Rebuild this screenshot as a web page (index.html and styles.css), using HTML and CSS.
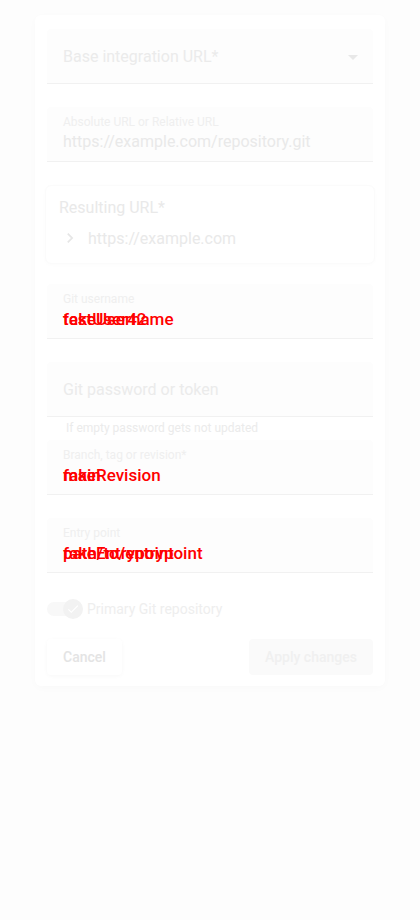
FILE: index.html
```html
<!DOCTYPE html>
<html>
<head>
<meta charset="utf-8">
<link rel="stylesheet" href="styles.css">
</head>
<body>
<div class="page">
  <div class="card">
    <div class="row">
      <div class="field select">
        <span class="placeholder">Base integration URL*</span>
        <span class="caret"></span>
      </div>
    </div>
    <div class="row">
      <div class="field top">
        <span class="label">Absolute URL or Relative URL</span>
        <span class="text">https://example.com/repository.git</span>
      </div>
    </div>
    <div class="result">
      <div class="result-title">Resulting URL*</div>
      <div class="result-line">
        <svg class="chev" viewBox="0 0 24 24" width="20" height="20"><path d="M10 6 8.59 7.41 13.17 12l-4.58 4.59L10 18l6-6z" fill="currentColor"/></svg>
        <span>https://example.com</span>
      </div>
    </div>
    <div class="row">
      <div class="field top">
        <span class="label">Git username</span>
        <span class="stack"><span class="red">fakeUsername</span><span class="red">testUser42</span></span>
      </div>
    </div>
    <div class="row">
      <div class="field">
        <span class="placeholder">Git password or token</span>
      </div>
      <div class="helper">If empty password gets not updated</div>
    </div>
    <div class="row">
      <div class="field top">
        <span class="label">Branch, tag or revision*</span>
        <span class="stack"><span class="red">fakeRevision</span><span class="red">main</span></span>
      </div>
    </div>
    <div class="row">
      <div class="field top">
        <span class="label">Entry point</span>
        <span class="stack"><span class="red">fakeEntrypoint</span><span class="red">path/to/entrypoint</span></span>
      </div>
    </div>
    <div class="switch-row">
      <span class="switch"><span class="track"></span><span class="thumb"><svg viewBox="0 0 24 24" width="14" height="14"><path d="M9 16.17 4.83 12l-1.42 1.41L9 19 21 7l-1.41-1.41z" fill="#ffffff"/></svg></span></span>
      <span class="switch-label">Primary Git repository</span>
    </div>
    <div class="actions">
      <button class="btn cancel">Cancel</button>
      <button class="btn apply">Apply changes</button>
    </div>
  </div>
</div>
</body>
</html>
```
FILE: styles.css
```css
html, body {
  margin: 0;
  padding: 0;
  background: #fdfdfd;
  font-family: Roboto, "Liberation Sans", sans-serif;
}
.page {
  min-height: 920px;
  padding-top: 15px;
  box-sizing: border-box;
}
.card {
  width: 350px;
  margin: 0 auto;
  background: #ffffff;
  border-radius: 6px;
  box-shadow: 0 2px 8px rgba(0,0,0,0.02);
  padding: 14px 12px 11px;
  box-sizing: border-box;
}
.row {
  height: 78px;
  display: flex;
  flex-direction: column;
}
.field {
  height: 55px;
  box-sizing: border-box;
  background: #fdfdfd;
  border-bottom: 1px solid #f1f1f1;
  border-radius: 4px 4px 0 0;
  padding: 0 16px;
  display: flex;
  flex-direction: column;
  justify-content: center;
}
.field.top {
  justify-content: flex-start;
  padding-top: 8px;
}
.field.select {
  flex-direction: row;
  align-items: center;
  justify-content: space-between;
}
.placeholder {
  font-size: 16px;
  color: #ebebeb;
  line-height: 20px;
  margin-top: 2px;
}
.caret {
  width: 0;
  height: 0;
  border-left: 5px solid transparent;
  border-right: 5px solid transparent;
  border-top: 5px solid #e8e8e8;
  margin-right: -1px;
  margin-top: 2px;
}
.label {
  font-size: 12px;
  line-height: 14px;
  color: #efefef;
}
.text {
  font-size: 16px;
  line-height: 20px;
  color: #e9e9e9;
  margin-top: 3px;
}
.stack {
  display: grid;
  margin-top: 3px;
  font-size: 17px;
  font-weight: 500;
  line-height: 20px;
}
.stack .red {
  grid-area: 1 / 1;
  color: #ff0000;
  white-space: nowrap;
}
.helper {
  font-size: 12px;
  line-height: 23px;
  color: #ebebeb;
  padding-left: 19px;
}
.result {
  margin: 0 -2px;
  height: 79px;
  box-sizing: border-box;
  border: 1px solid #fbfbfb;
  border-radius: 6px;
  box-shadow: 0 1px 4px rgba(0,0,0,0.015);
  padding: 11px 13px 0;
  margin-bottom: 20px;
}
.result-title {
  font-size: 16px;
  line-height: 22px;
  color: #e9e9e9;
}
.result-line {
  display: flex;
  align-items: center;
  margin-top: 9px;
  font-size: 16px;
  color: #e9e9e9;
  gap: 8px;
}
.chev {
  color: #e6e6e6;
  margin-left: 1px;
}
.switch-row {
  display: flex;
  align-items: center;
  height: 26px;
}
.switch {
  position: relative;
  width: 38px;
  height: 26px;
  display: flex;
  align-items: center;
  margin-right: 2px;
}
.track {
  width: 34px;
  height: 14px;
  border-radius: 7px;
  background: #f8f8f8;
}
.thumb {
  position: absolute;
  left: 16px;
  top: 3px;
  width: 20px;
  height: 20px;
  border-radius: 50%;
  background: #f2f2f2;
  display: flex;
  align-items: center;
  justify-content: center;
}
.switch-label {
  font-size: 14px;
  color: #eeeeee;
}
.actions {
  display: flex;
  justify-content: space-between;
  margin-top: 17px;
}
.btn {
  height: 36px;
  border: none;
  border-radius: 4px;
  font-family: Roboto, "Liberation Sans", sans-serif;
  font-size: 14px;
  font-weight: 500;
  padding: 0 16px;
}
.cancel {
  width: 75px;
  background: #ffffff;
  color: #e4e4e4;
  box-shadow: 0 1px 4px rgba(0,0,0,0.03);
}
.apply {
  width: 124px;
  background: #fafafa;
  color: #f0f0f0;
}
```
